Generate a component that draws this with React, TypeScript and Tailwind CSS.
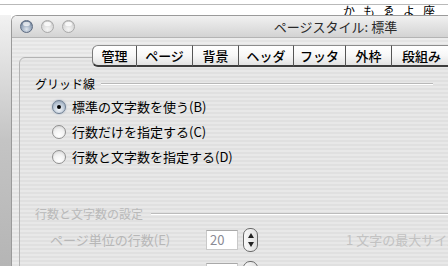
import React from "react";

const jp = "font-['Lucida_Grande','Noto_Sans_CJK_JP',sans-serif]";
const stripes =
  "bg-[repeating-linear-gradient(180deg,#ececec_0px,#ececec_2px,#e4e4e4_2px,#e4e4e4_4px)]";

const tabs = [
  { label: "管理", w: "w-[45px]" },
  { label: "ページ", w: "w-[56px]" },
  { label: "背景", w: "w-[46px]" },
  { label: "ヘッダ", w: "w-[55px]" },
  { label: "フッタ", w: "w-[52px]" },
  { label: "外枠", w: "w-[46px]" },
  { label: "段組み", w: "w-[60px]" },
];

function Light({ active }: { active?: boolean }) {
  return (
    <div
      className={`w-[13px] h-[13px] rounded-full border ${
        active
          ? "border-[#5d6b80] bg-[radial-gradient(circle_at_50%_75%,#dfe6ee_0%,#93a3b8_55%,#5f6f86_100%)]"
          : "border-[#a9a9a9] bg-[radial-gradient(circle_at_50%_75%,#f4f4f4_0%,#d9d9d9_60%,#bdbdbd_100%)]"
      } relative`}
    >
      <div
        className={`absolute left-[2px] top-[1px] w-[7px] h-[4px] rounded-full ${
          active ? "bg-white/70" : "bg-white/80"
        }`}
      />
    </div>
  );
}

function Radio({ on }: { on?: boolean }) {
  return (
    <div
      className={`w-[14px] h-[14px] rounded-full border flex items-center justify-center shrink-0 ${
        on
          ? "border-[#6e7e92] bg-[radial-gradient(circle_at_50%_70%,#f3f6fa_0%,#bcc8d6_55%,#8797ab_100%)] shadow-[0_0_2px_#9aa9bd]"
          : "border-[#8f8f8f] bg-[radial-gradient(circle_at_50%_75%,#ffffff_0%,#f2f2f2_50%,#cfcfcf_100%)]"
      }`}
    >
      {on && <div className="w-[4px] h-[4px] rounded-full bg-black" />}
    </div>
  );
}

function Stepper() {
  return (
    <div className="w-[15px] h-[24px] rounded-[7px] border border-[#6a6a6a] bg-gradient-to-r from-[#f9f9f9] to-[#e0e0e0] flex flex-col items-center justify-between py-[4px]">
      <svg width="6" height="5" viewBox="0 0 6 5">
        <path d="M3 0L6 5H0z" fill="#222" />
      </svg>
      <svg width="6" height="5" viewBox="0 0 6 5">
        <path d="M0 0H6L3 5z" fill="#222" />
      </svg>
    </div>
  );
}

export default function App() {
  return (
    <div className={`w-[448px] h-[266px] overflow-hidden bg-white flex flex-col relative ${jp}`}>
      <div className="h-[15px] shrink-0 relative">
        <div className="mt-[4px] h-px bg-[#b9b9b9]" />
        <span className="absolute left-[343px] top-[5px] text-[12px] leading-[12px] tracking-[8px] text-black whitespace-nowrap">
          かもゑよ座
        </span>
      </div>

      <div className="flex flex-1 min-h-0">
        <div className="w-[11px] shrink-0 bg-gradient-to-b from-[#f2f2f2] via-[#c4c4c4] to-[#b5b5b5]" />
        <div className="relative z-10 w-[648px] shrink-0 flex flex-col rounded-tl-[6px] border-l border-t border-[#9a9a9a] overflow-hidden">
          <div className="h-[22px] shrink-0 relative flex items-center pl-[8px] gap-[8px] bg-gradient-to-b from-[#f1f1f1] to-[#d3d3d3] border-b border-[#b4b4b4]">
            <Light active />
            <Light />
            <Light />
            <div className="absolute inset-0 flex items-center justify-center text-[13px] text-[#2a2a2a]">
              ページスタイル: 標準
            </div>
          </div>

          <div className={`flex-1 ${stripes} pl-[7px] pt-[7px]`}>
            <div className="relative z-10 ml-[73px] h-[22px] flex">
              {tabs.map((t, i) => (
                <div
                  key={t.label}
                  className={`${t.w} h-full flex items-center justify-center text-[13px] font-medium text-black bg-gradient-to-b from-white via-[#f7f7f7] to-[#e2e2e2] border-t border-b-2 border-t-[#8c8c8c] border-b-[#3c3c3c] border-r border-r-[#555] ${
                    i === 0 ? "rounded-l-[6px] border-l border-l-[#7a7a7a]" : ""
                  }`}
                >
                  {t.label}
                </div>
              ))}
            </div>

            <div className="-mt-[10px] w-[620px] h-[260px] rounded-[6px] border border-[#b3b3b3] bg-black/[0.015] pl-[15px] pt-[18px]">
              <div className="w-[398px] h-[16px] flex items-center gap-[6px]">
                <span className="text-[12px] leading-[16px] text-black">グリッド線</span>
                <div className="flex-1 border-t border-t-[#b8b8b8] border-b border-b-white" />
              </div>

              <div className="mt-[2px] pl-[17px] flex flex-col">
                {[
                  { label: "標準の文字数を使う(B)", on: true },
                  { label: "行数だけを指定する(C)" },
                  { label: "行数と文字数を指定する(D)" },
                ].map((r) => (
                  <div key={r.label} className="h-[25px] flex items-center gap-[6px]">
                    <Radio on={r.on} />
                    <span className="text-[13px] text-black">{r.label}</span>
                  </div>
                ))}
              </div>

              <div className="mt-[37px] w-[600px] h-[16px] flex items-center gap-[8px]">
                <span className="text-[12px] leading-[16px] text-[#b9b9b9]">行数と文字数の設定</span>
                <div className="flex-1 border-t border-t-[#bcbcbc] border-b border-b-white" />
              </div>

              <div className="mt-[6px] pl-[15px] h-[24px] flex items-center">
                <span className="w-[156px] text-[13px] text-[#b7b7b7]">ページ単位の行数(E)</span>
                <div className="w-[32px] h-[20px] bg-white border border-[#c9c9c9] border-t-[#a9a9a9] text-[13px] leading-[18px] pl-[3px] text-[#8a8a94]">
                  20
                </div>
                <div className="ml-[5px]">
                  <Stepper />
                </div>
                <span className="ml-[88px] text-[13px] text-[#c2c2c2] whitespace-nowrap">1 文字の最大サイズ</span>
              </div>

              <div className="mt-[9px] pl-[171px] h-[24px] flex items-center">
                <div className="w-[32px] h-[20px] bg-white border border-[#c9c9c9] border-t-[#a9a9a9]" />
                <div className="ml-[5px]">
                  <Stepper />
                </div>
              </div>
            </div>
          </div>
        </div>
      </div>
    </div>
  );
}
